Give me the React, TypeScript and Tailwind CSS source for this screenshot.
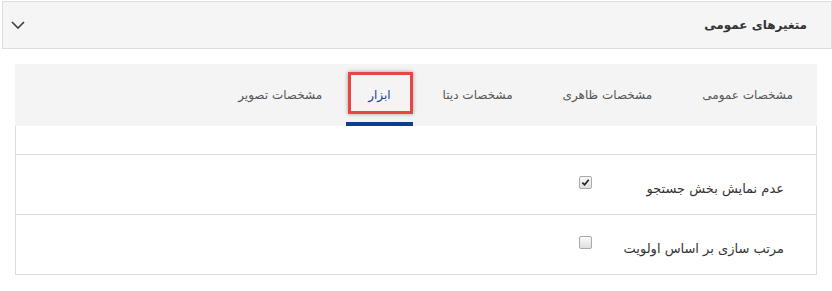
const tabs = [
  { id: "general", label: "مشخصات عمومی" },
  { id: "appearance", label: "مشخصات ظاهری" },
  { id: "data", label: "مشخصات دیتا" },
  { id: "tools", label: "ابزار" },
  { id: "image", label: "مشخصات تصویر" },
];

const options = [
  { id: "hideSearch", label: "عدم نمایش بخش جستجو", checked: true },
  { id: "sortPriority", label: "مرتب سازی بر اساس اولویت", checked: false },
];

const FakeCheckbox = ({ checked }: { checked: boolean }) => (
  <span className="flex h-[13px] w-[13px] items-center justify-center rounded-[2px] border border-[#a9a9a9] bg-gradient-to-b from-[#fcfcfc] to-[#dedede]">
    {checked && (
      <svg viewBox="0 0 10 10" className="h-[9px] w-[9px]">
        <path d="M1.5 5.2 L4 7.6 L8.6 2" fill="none" stroke="#222" strokeWidth="1.9" />
      </svg>
    )}
  </span>
);

const App = () => {
  const active = "tools";

  return (
    <div dir="rtl" className="h-[291px] w-[832px] bg-white pt-px font-['DejaVu_Sans',sans-serif] text-[#333]">
      {/* Panel header */}
      <div className="flex h-[48px] w-[830px] items-center justify-between border border-[#dddddd] bg-[#f5f5f5] pl-[8px] pr-[24px]">
        <span className="text-[12px] font-bold text-[#333]">متغیرهای عمومی</span>
        <svg viewBox="0 0 14 8" className="h-[8px] w-[14px]">
          <path d="M1 1 L7 7 L13 1" fill="none" stroke="#3a3d44" strokeWidth="1.6" />
        </svg>
      </div>

      <div className="mx-[15px] mt-[15px]">
        {/* Tabs */}
        <div className="flex h-[62px] items-stretch gap-[16px] bg-[#f4f4f4] pr-[7px]">
          {tabs.map((tab) => {
            const isActive = tab.id === active;
            return (
              <div
                key={tab.id}
                className={
                  isActive
                    ? "relative -ml-[9px] -mr-[3px] flex items-center border-b-4 border-[#0d3f8f] px-[22px] pt-[4px] text-[12px] text-[#1c3f94]"
                    : "relative flex items-center border-b-4 border-transparent px-[17px] pt-[4px] text-[12px] text-[#555]"
                }
              >
                {tab.label}
                {isActive && (
                  <span className="absolute bottom-[8px] left-[2px] right-0 top-[8px] border-[3px] border-[#e84545] shadow-[0_0_4px_rgba(0,0,0,0.35)]" />
                )}
              </div>
            );
          })}
        </div>

        {/* Tab content */}
        <div className="border-x border-[#dddddd]">
          <div className="h-[29px] border-b border-[#dddddd]" />
          {options.map((opt) => (
            <div key={opt.id} className="flex h-[60px] items-center border-b border-[#dddddd] pr-[32px]">
              <span className="w-[180px] shrink-0 pt-[8px] text-[13px] text-[#333]">{opt.label}</span>
              <span className="mr-[12px] -mt-[4px]">
                <FakeCheckbox checked={opt.checked} />
              </span>
            </div>
          ))}
        </div>
      </div>
    </div>
  );
};

export default App;
